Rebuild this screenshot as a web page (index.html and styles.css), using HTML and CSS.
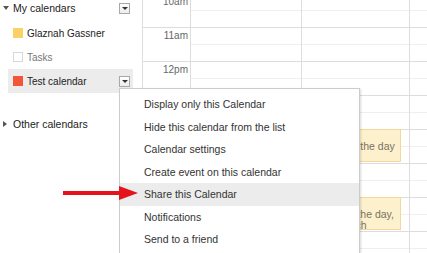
FILE: index.html
```html
<!DOCTYPE html>
<html lang="en">
<head>
  <meta charset="UTF-8">
  <meta name="viewport" content="width=device-width, initial-scale=1.0">
  <title>Calendar - share menu</title>
  <link rel="stylesheet" href="styles.css">
</head>
<body>
  <div class="app">
    <div class="sidebar">
      <div class="section-head">
        <span class="toggle open"></span>
        <span class="section-title">My calendars</span>
        <span class="drop"></span>
      </div>
      <ul class="cal-list">
        <li class="cal"><span class="swatch yellow"></span>Glaznah Gassner</li>
        <li class="cal tasks"><span class="swatch empty"></span>Tasks</li>
        <li class="cal active"><span class="swatch red"></span>Test calendar<span class="drop"></span></li>
      </ul>
      <div class="section-head other">
        <span class="toggle closed"></span>
        <span class="section-title">Other calendars</span>
      </div>
    </div>

    <div class="grid">
      <div class="hours">
        <div class="hour"><div class="time">10am</div><div class="day"></div><div class="day narrow"></div><div class="day last"></div></div>
        <div class="hour"><div class="time">11am</div><div class="day"></div><div class="day narrow"></div><div class="day last"></div></div>
        <div class="hour"><div class="time">12pm</div><div class="day"></div><div class="day narrow"></div><div class="day last"></div></div>
        <!-- labels below this point sit under the open menu -->
        <div class="hour"><div class="time"></div><div class="day"></div><div class="day narrow"></div><div class="day last"></div></div>
        <div class="hour"><div class="time"></div><div class="day"></div>
          <div class="day narrow"><div class="event">Standup<br>midpoint of the day</div></div>
          <div class="day last"></div></div>
        <div class="hour"><div class="time"></div><div class="day"></div><div class="day narrow"></div><div class="day last"></div></div>
        <div class="hour"><div class="time"></div><div class="day"></div>
          <div class="day narrow"><div class="event">Plan the<br>balance of the day,<br>a late brunch</div></div>
          <div class="day last"></div></div>
        <div class="hour"><div class="time"></div><div class="day"></div><div class="day narrow"></div><div class="day last"></div></div>
      </div>
    </div>

    <ul class="menu">
      <li>Display only this Calendar</li>
      <li>Hide this calendar from the list</li>
      <li>Calendar settings</li>
      <li>Create event on this calendar</li>
      <li class="hover">Share this Calendar</li>
      <li>Notifications</li>
      <li>Send to a friend</li>
    </ul>

    <svg class="arrow" width="80" height="20" viewBox="0 0 80 20">
      <rect x="3" y="6" width="60" height="4" fill="#e5131b"/>
      <polygon points="59,1 78,8 59,15" fill="#e5131b"/>
    </svg>
  </div>
</body>
</html>
```

FILE: styles.css
```css
body {
  margin: 0;
  font-family: "Liberation Sans", Arial, sans-serif;
  font-size: 10.5px;
  color: #222;
  background: #fff;
}
.app {
  position: relative;
  display: flex;
  height: 253px;
  overflow: hidden;
}

/* sidebar */
.sidebar {
  width: 142px;
  flex-shrink: 0;
}
.section-head {
  display: flex;
  align-items: center;
  height: 16px;
  padding-right: 12px;
}
.section-head.other {
  margin-top: 23px;
}
.section-title {
  flex: 1;
}
.toggle {
  width: 10px;
  margin-left: 3px;
  display: flex;
  align-items: center;
}
.toggle::before {
  content: "";
  border-style: solid;
  border-color: transparent;
}
.toggle.open::before {
  border-width: 4px 3px 0 3px;
  border-top-color: #555;
}
.toggle.closed::before {
  border-width: 3px 0 3px 4px;
  border-left-color: #555;
}
.drop {
  width: 11px;
  height: 11px;
  box-sizing: border-box;
  border: 1px solid #a8a8a8;
  background: linear-gradient(#fff, #ececec);
  display: flex;
  align-items: center;
  justify-content: center;
}
.drop::after {
  content: "";
  border-style: solid;
  border-width: 3px 3px 0 3px;
  border-color: #333 transparent transparent transparent;
}
.cal-list {
  list-style: none;
  margin: 5px 0 0;
  padding: 0;
}
.cal {
  display: flex;
  align-items: center;
  height: 24px;
  margin-left: 8px;
  width: 125px;
  padding-left: 5px;
  box-sizing: border-box;
  font-size: 10px;
}
.cal .drop {
  margin-left: auto;
  margin-right: 3px;
}
.cal.active {
  background: #ececec;
}
.cal.tasks {
  color: #777;
}
.swatch {
  width: 10px;
  height: 10px;
  box-sizing: border-box;
  margin-right: 4px;
}
.swatch.yellow { background: #fad165; }
.swatch.red { background: #f2553a; }
.swatch.empty { border: 1px solid #d8d8d8; }

/* time grid */
.grid {
  flex: 1;
  border-left: 1px solid #ddd;
  overflow: hidden;
}
.hours {
  margin-top: -7px;
}
.hour {
  display: flex;
  height: 34px;
  box-sizing: border-box;
  border-top: 1px solid #ddd;
}
.time {
  width: 47px;
  flex-shrink: 0;
  box-sizing: border-box;
  padding: 2px 2px 0 0;
  text-align: right;
  font-size: 10px;
  color: #666;
}
.day {
  position: relative;
  width: 111px;
  flex-shrink: 0;
  box-sizing: border-box;
  border-left: 1px solid #ddd;
  background: linear-gradient(#efefef, #efefef) 0 16px / 100% 1px no-repeat;
}
.day.narrow {
  width: 108px;
}
.day.last {
  flex: 1;
}
.event {
  position: absolute;
  top: -1px;
  left: 1px;
  right: 8px;
  height: 33px;
  box-sizing: border-box;
  padding: 0 2px;
  background: #fdf0cc;
  border: 1px solid #f2d89c;
  color: #7a7262;
  line-height: 11px;
  white-space: nowrap;
  overflow: hidden;
}

/* context menu */
.menu {
  position: absolute;
  left: 119px;
  top: 88px;
  width: 241px;
  height: 180px;
  box-sizing: border-box;
  margin: 0;
  padding: 4px 0 0;
  list-style: none;
  background: #fff;
  border: 1px solid #ccc;
  box-shadow: 1px 1px 2px rgba(0, 0, 0, 0.15);
}
.menu li {
  height: 22.5px;
  line-height: 22.5px;
  padding-left: 24px;
  color: #333;
}
.menu li.hover {
  background: #ececec;
}

.arrow {
  position: absolute;
  left: 60px;
  top: 185px;
}
```
